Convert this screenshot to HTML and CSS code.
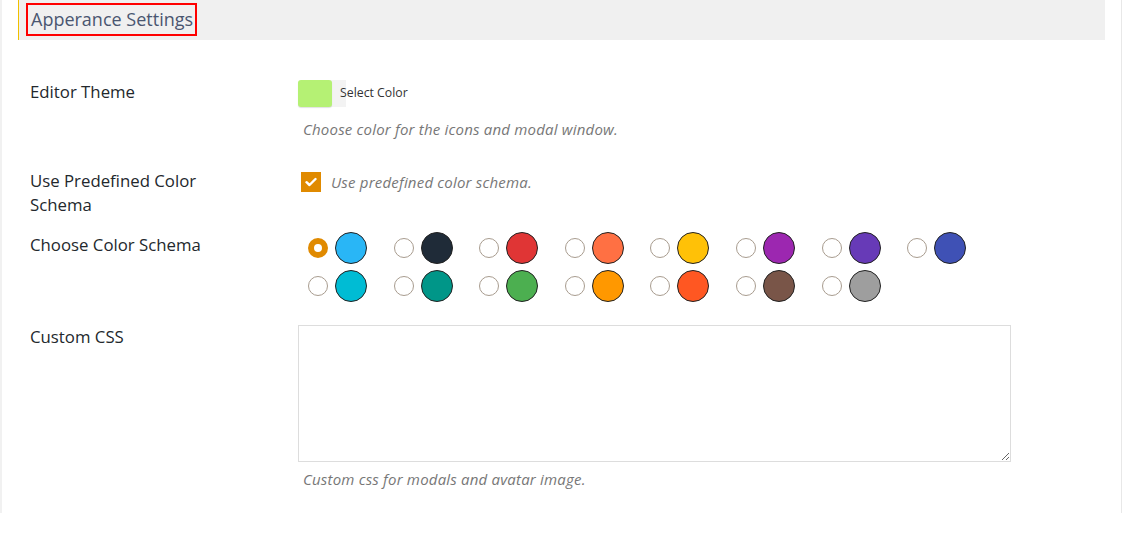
FILE: index.html
```html
<!DOCTYPE html>
<html lang="en">
<head>
    <meta charset="UTF-8">
    <meta name="viewport" content="width=device-width, initial-scale=1.0">
    <title>Apperance Settings</title>
    <link rel="stylesheet" href="styles.css">
</head>
<body>

<div class="panel">
    <div class="section-head">
        <h2 class="section-title">Apperance Settings</h2>
    </div>

    <!-- Editor theme -->
    <div class="row row-theme">
        <div class="label">Editor Theme</div>
        <div class="control">
            <button class="color-btn" type="button">
                <span class="swatch"></span>
                <span class="swatch-edge"></span>
                <span class="color-text">Select Color</span>
            </button>
            <p class="desc">Choose color for the icons and modal window.</p>
        </div>
    </div>

    <!-- Predefined schema -->
    <div class="row row-predef">
        <div class="label">Use Predefined Color Schema</div>
        <div class="control">
            <label class="check">
                <span class="check-box">
                    <svg width="12" height="10" viewBox="0 0 12 10"><path d="M1.5 5.2 L4.5 8 L10.5 2" fill="none" stroke="#fff" stroke-width="2.4" stroke-linecap="round" stroke-linejoin="round"/></svg>
                </span>
                <span class="check-text">Use predefined color schema.</span>
            </label>
        </div>
    </div>

    <!-- Schema picker -->
    <div class="row row-schema">
        <div class="label">Choose Color Schema</div>
        <div class="control">
            <div class="schema-grid">
                <div class="schema"><span class="radio checked"></span><span class="dot" style="background:#29b6f6"></span></div>
                <div class="schema"><span class="radio"></span><span class="dot" style="background:#1f2b38"></span></div>
                <div class="schema"><span class="radio"></span><span class="dot" style="background:#e03535"></span></div>
                <div class="schema"><span class="radio"></span><span class="dot" style="background:#ff7043"></span></div>
                <div class="schema"><span class="radio"></span><span class="dot" style="background:#ffc107"></span></div>
                <div class="schema"><span class="radio"></span><span class="dot" style="background:#9c27b0"></span></div>
                <div class="schema"><span class="radio"></span><span class="dot" style="background:#673ab7"></span></div>
                <div class="schema"><span class="radio"></span><span class="dot" style="background:#3f51b5"></span></div>
                <div class="schema"><span class="radio"></span><span class="dot" style="background:#00bcd4"></span></div>
                <div class="schema"><span class="radio"></span><span class="dot" style="background:#009688"></span></div>
                <div class="schema"><span class="radio"></span><span class="dot" style="background:#4caf50"></span></div>
                <div class="schema"><span class="radio"></span><span class="dot" style="background:#ff9800"></span></div>
                <div class="schema"><span class="radio"></span><span class="dot" style="background:#ff5722"></span></div>
                <div class="schema"><span class="radio"></span><span class="dot" style="background:#795548"></span></div>
                <div class="schema"><span class="radio"></span><span class="dot" style="background:#9e9e9e"></span></div>
            </div>
        </div>
    </div>

    <!-- Custom css -->
    <div class="row row-css">
        <div class="label">Custom CSS</div>
        <div class="control">
            <textarea class="css-field"></textarea>
            <p class="desc">Custom css for modals and avatar image.</p>
        </div>
    </div>
</div>

</body>
</html>
```

FILE: styles.css
```css
body {
    margin: 0;
    background-color: #fff;
    font-family: "Open Sans", "Noto Sans", Arial, sans-serif;
    color: #23282d;
}
.panel {
    height: 513px;
    box-sizing: border-box;
    border-left: 2px solid #f1f1f1;
    border-right: 1px solid #e8e8e8;
    padding: 0 16px 0 28px;
}
.section-head {
    margin-left: -12px;
    height: 40px;
    background-color: #f0f0f0;
    border-left: 1px solid #f0c000;
    padding: 3px 0 0 7px;
    box-sizing: border-box;
}
.section-title {
    display: inline-block;
    margin: 0;
    padding: 0 2px 0 3px;
    border: 2px solid #f00;
    font-size: 18px;
    font-weight: normal;
    line-height: 29px;
    color: #4a5670;
}
.row {
    display: flex;
}
.label {
    width: 268px;
    flex-shrink: 0;
    font-size: 16.8px;
    line-height: 24px;
}
.row-predef .label {
    width: 200px;
    margin-right: 68px;
}
.control {
    flex: 1;
}
.desc {
    margin: 12px 0 0 5px;
    font-size: 15px;
    line-height: 20px;
    letter-spacing: 0.2px;
    font-style: italic;
    color: #777;
}
.row-theme {
    margin-top: 40px;
}
.color-btn {
    display: flex;
    align-items: center;
    padding: 0;
    border: none;
    background: none;
    font-family: inherit;
    cursor: pointer;
}
.swatch {
    width: 34px;
    height: 27px;
    border-radius: 3px;
    background-color: #b5f174;
    box-shadow: 0 1px 1px rgba(0, 0, 0, 0.12);
    position: relative;
    z-index: 1;
}
.swatch-edge {
    width: 16px;
    height: 27px;
    margin-left: -2px;
    background-color: #f3f3f3;
}
.color-text {
    margin-left: -6px;
    padding-bottom: 3px;
    font-size: 12.3px;
    color: #333;
}
.row-predef {
    margin-top: 30px;
}
.check {
    display: flex;
    align-items: center;
    margin: 3px 0 0 3px;
}
.check-box {
    width: 20px;
    height: 20px;
    background-color: #e08a00;
    display: flex;
    align-items: center;
    justify-content: center;
}
.check-text {
    margin-left: 10px;
    font-size: 15px;
    letter-spacing: 0.2px;
    font-style: italic;
    color: #777;
}
.row-schema {
    margin-top: 16px;
}
.schema-grid {
    display: grid;
    grid-template-columns: repeat(8, 85.6px);
    row-gap: 6px;
    padding-left: 10px;
    margin-top: -1px;
}
.schema {
    display: flex;
    align-items: center;
}
.radio {
    width: 20px;
    height: 20px;
    box-sizing: border-box;
    border: 1px solid #a89c8f;
    border-radius: 50%;
    background-color: #fff;
}
.radio.checked {
    border: 6px solid #e08a00;
}
.dot {
    width: 32px;
    height: 32px;
    box-sizing: border-box;
    margin-left: 7px;
    border: 1px solid #222;
    border-radius: 50%;
}
.row-css {
    margin-top: 23px;
}
.css-field {
    display: block;
    width: 713px;
    height: 137px;
    box-sizing: border-box;
    border: 1px solid #ddd;
    margin: 0;
}
.row-css .desc {
    margin-top: 7px;
}
```
